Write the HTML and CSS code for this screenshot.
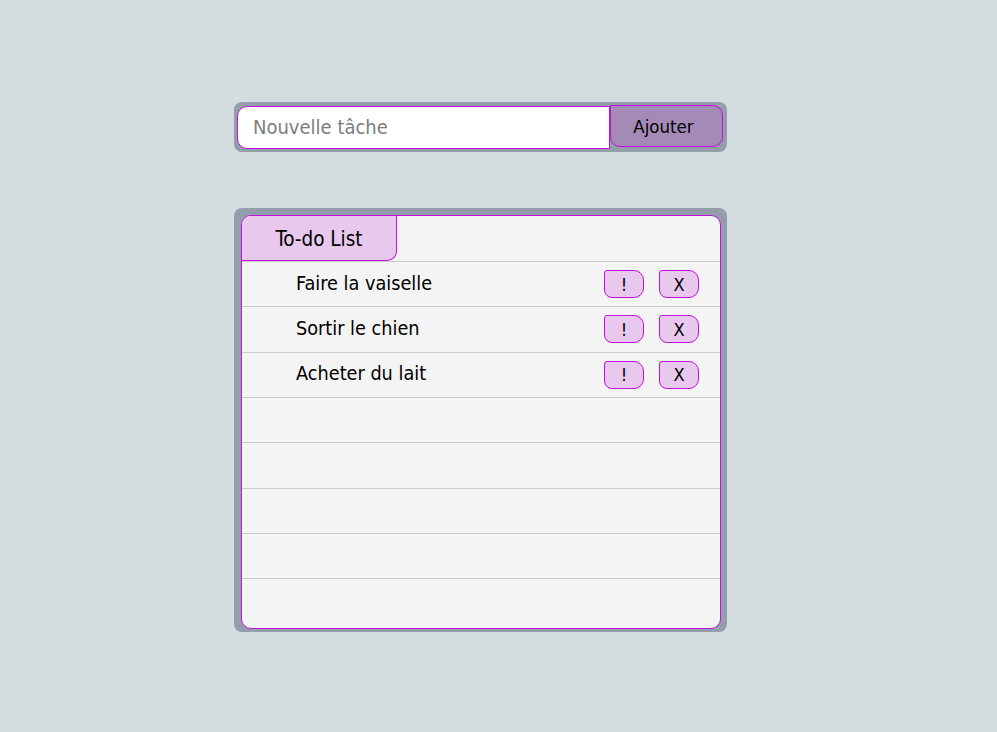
FILE: index.html
```html
<!DOCTYPE html>
<html lang="fr">
<head>
<meta charset="utf-8">
<title>To-do List</title>
<link rel="stylesheet" href="styles.css">
</head>
<body>
<main class="page">
  <form class="add-bar">
    <input class="add-input" type="text" placeholder="Nouvelle tâche">
    <button class="add-btn" type="button">Ajouter</button>
  </form>
  <section class="list-frame">
    <div class="list">
      <div class="list-head"><div class="tab">To-do List</div></div>
      <ul class="items">
        <li class="item"><span class="item-text">Faire la vaiselle</span><button class="mini-btn" type="button">!</button><button class="mini-btn" type="button">X</button></li>
        <li class="item"><span class="item-text">Sortir le chien</span><button class="mini-btn" type="button">!</button><button class="mini-btn" type="button">X</button></li>
        <li class="item"><span class="item-text">Acheter du lait</span><button class="mini-btn" type="button">!</button><button class="mini-btn" type="button">X</button></li>
        <li class="item"></li>
        <li class="item"></li>
        <li class="item"></li>
        <li class="item"></li>
      </ul>
    </div>
  </section>
</main>
</body>
</html>
```
FILE: styles.css
```css
* { box-sizing: border-box; }

html, body {
  margin: 0;
  padding: 0;
  background: #d3dcdf;
}

body {
  font-family: "DejaVu Sans Condensed", "DejaVu Sans", sans-serif;
  font-stretch: condensed;
  color: #000;
}

.page {
  display: flex;
  flex-direction: column;
  align-items: flex-start;
  padding: 102px 0 0 234px;
  gap: 56px;
}

.add-bar {
  display: flex;
  align-items: flex-start;
  width: 493px;
  height: 50px;
  margin: 0;
  padding: 3px 4px 3px 3px;
  background: #939eaa;
  border-radius: 8px;
}

.add-input {
  width: 373px;
  height: 43px;
  margin: 1px 0 0 0;
  padding: 0 0 2px 15px;
  border: 1px solid #c010e0;
  border-radius: 10px 0 0 10px;
  background: #fff;
  font-family: inherit;
  font-stretch: condensed;
  font-size: 20px;
  color: #000;
  outline: none;
}

.add-input::placeholder { color: #7d7d7d; }

.add-btn {
  width: 113px;
  height: 42px;
  margin: 0;
  padding: 0 6px 0 0;
  border: 1px solid #c010e0;
  border-radius: 0 10px 10px 10px;
  background: #a38ab7;
  font-family: inherit;
  font-stretch: condensed;
  font-size: 18.5px;
  color: #000;
}

.list-frame {
  width: 493px;
  height: 424px;
  padding: 7px 6px 3px 7px;
  background: #939eaa;
  border-radius: 8px;
}

.list {
  display: flex;
  flex-direction: column;
  height: 100%;
  border: 1px solid #c010e0;
  border-radius: 10px;
  background: #f4f4f4;
  overflow: hidden;
}

.list-head {
  display: flex;
  border-bottom: 1px solid #cbcbcb;
}

.tab {
  width: 155px;
  height: 45px;
  display: flex;
  align-items: center;
  justify-content: center;
  padding-top: 1px;
  background: #e9c8ee;
  border-right: 1px solid #c010e0;
  border-bottom: 1px solid #c010e0;
  border-radius: 0 0 10px 0;
  font-size: 20.5px;
}

.items {
  list-style: none;
  margin: 0;
  padding: 0;
}

.item {
  display: flex;
  align-items: center;
  height: 45.333px;
  padding: 0 21px 0 54px;
  border-bottom: 1px solid #cbcbcb;
  gap: 15px;
  font-size: 19.7px;
}

.item-text { flex: 1; padding-bottom: 2px; }

.mini-btn {
  width: 40px;
  height: 28px;
  margin: 0;
  padding: 0;
  border: 1px solid #c010e0;
  border-radius: 3px 10px 10px 8px;
  background: #e9c8ee;
  font-family: inherit;
  font-stretch: condensed;
  font-size: 18px;
  color: #000;
}
```
